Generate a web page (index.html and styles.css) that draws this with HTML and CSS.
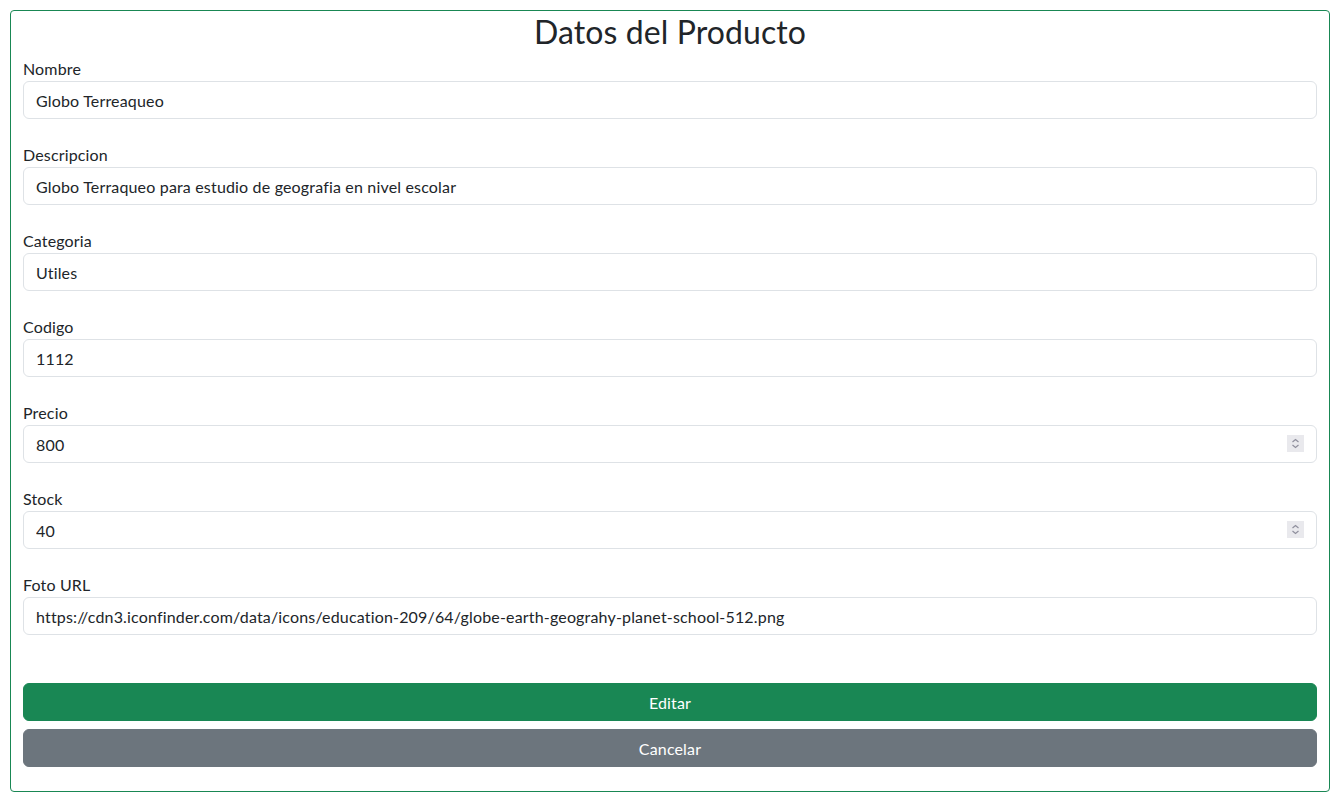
FILE: index.html
```html
<!DOCTYPE html>
<html lang="es">
<head>
<meta charset="utf-8">
<title>Datos del Producto</title>
<link rel="stylesheet" href="styles.css">
</head>
<body>
<div class="card">
  <h2 class="title">Datos del Producto</h2>
  <form class="form">
    <div class="field">
      <label class="label">Nombre</label>
      <input class="input" type="text" value="Globo Terreaqueo">
    </div>
    <div class="field">
      <label class="label">Descripcion</label>
      <input class="input" type="text" value="Globo Terraqueo para estudio de geografia en nivel escolar">
    </div>
    <div class="field">
      <label class="label">Categoria</label>
      <input class="input" type="text" value="Utiles">
    </div>
    <div class="field">
      <label class="label">Codigo</label>
      <input class="input" type="text" value="1112">
    </div>
    <div class="field">
      <label class="label">Precio</label>
      <div class="num-wrap">
        <input class="input" type="number" value="800">
        <span class="spinner"><svg width="17" height="17" viewBox="0 0 17 17"><path d="M5.5 7 L8.5 4.5 L11.5 7" fill="none" stroke="#8f8f9d" stroke-width="1.2"/><path d="M5.5 10 L8.5 12.5 L11.5 10" fill="none" stroke="#8f8f9d" stroke-width="1.2"/></svg></span>
      </div>
    </div>
    <div class="field">
      <label class="label">Stock</label>
      <div class="num-wrap">
        <input class="input" type="number" value="40">
        <span class="spinner"><svg width="17" height="17" viewBox="0 0 17 17"><path d="M5.5 7 L8.5 4.5 L11.5 7" fill="none" stroke="#8f8f9d" stroke-width="1.2"/><path d="M5.5 10 L8.5 12.5 L11.5 10" fill="none" stroke="#8f8f9d" stroke-width="1.2"/></svg></span>
      </div>
    </div>
    <div class="field">
      <label class="label">Foto URL</label>
      <input class="input" type="text" value="https://cdn3.iconfinder.com/data/icons/education-209/64/globe-earth-geograhy-planet-school-512.png">
    </div>
    <div class="actions">
      <button type="button" class="btn btn-success">Editar</button>
      <button type="button" class="btn btn-secondary">Cancelar</button>
    </div>
  </form>
</div>
</body>
</html>
```

FILE: styles.css
```css
* { box-sizing: border-box; }
html, body { margin: 0; padding: 0; background: #fff; }
body {
  font-family: Lato, "Noto Sans", sans-serif;
  font-size: 16px;
  line-height: 24px;
  color: #212529;
  padding: 10px 0 0 10px;
}
.card {
  width: 1320px;
  height: 782px;
  border: 1px solid #198754;
  border-radius: 4px;
  padding: 2px 12px 24px 12px;
}
.title {
  margin: 0 0 6px 0;
  font-size: 32px;
  font-weight: 400;
  line-height: 38px;
  text-align: center;
  letter-spacing: 0.1px;
}
.form { display: flex; flex-direction: column; gap: 24px; }
.field { display: flex; flex-direction: column; }
.label { display: block; line-height: 24px; letter-spacing: 0.15px; }
.num-wrap { position: relative; }
.input {
  display: block;
  width: 100%;
  height: 38px;
  padding: 6px 12px;
  font-family: inherit;
  font-size: 16px;
  letter-spacing: 0.17px;
  color: #212529;
  border: 1px solid #dee2e6;
  border-radius: 6px;
  background: #fff;
  outline: none;
  -moz-appearance: textfield;
}
.input::-webkit-inner-spin-button,
.input::-webkit-outer-spin-button { -webkit-appearance: none; margin: 0; }
.spinner {
  position: absolute;
  right: 13px;
  top: 10px;
  width: 17px;
  height: 17px;
  background: #e9e9ed;
  display: block;
}
.spinner svg { display: block; }
.actions {
  display: flex;
  flex-direction: column;
  gap: 8px;
  margin-top: 24px;
}
.btn {
  display: block;
  width: 100%;
  height: 38px;
  border: 1px solid transparent;
  border-radius: 6px;
  font-family: inherit;
  font-size: 16px;
  letter-spacing: 0.15px;
  color: #fff;
  padding: 6px 12px;
}
.btn-success { background: #198754; border-color: #198754; }
.btn-secondary { background: #6c757d; border-color: #6c757d; }
```
